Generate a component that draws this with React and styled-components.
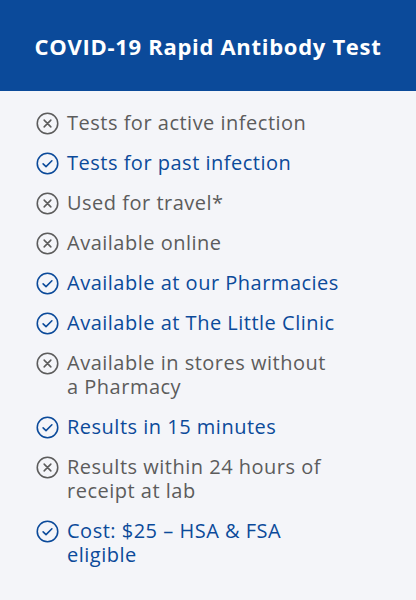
import styled, { createGlobalStyle } from "styled-components";

const GlobalStyle = createGlobalStyle`
  html, body {
    margin: 0;
    padding: 0;
    background: #f4f5f9;
  }
  body {
    font-family: "Open Sans", Lato, sans-serif;
  }
`;

const Card = styled.div`
  width: 416px;
  min-height: 600px;
  background: #f4f5f9;
`;

const Header = styled.header`
  height: 91px;
  background: #0b4a9a;
  display: flex;
  align-items: center;
  justify-content: center;
`;

const Title = styled.h1`
  margin: 0;
  color: #fff;
  font-size: 22px;
  font-weight: 700;
  letter-spacing: 0.7px;
`;

const List = styled.ul`
  list-style: none;
  margin: 0;
  padding: 20px 30px 0 35px;
  display: flex;
  flex-direction: column;
  gap: 16px;
`;

const Item = styled.li`
  display: flex;
  align-items: flex-start;
  gap: 8px;
  font-size: 20px;
  line-height: 24px;
  letter-spacing: 0.5px;
  color: ${(p) => (p.$ok ? "#0b4a9a" : "#5c5c5c")};
`;

const IconBox = styled.span`
  flex: none;
  width: 24px;
  height: 24px;
  display: flex;
  align-items: center;
  justify-content: center;
`;

const Text = styled.span`
  white-space: pre-line;
`;

function StatusIcon({ ok }) {
  return (
    <IconBox>
      <svg width="23" height="23" viewBox="0 0 22 22" fill="none" stroke="currentColor" strokeWidth="1.5" strokeLinecap="round" strokeLinejoin="round">
        <circle cx="11" cy="11" r="9.8" />
        {ok ? (
          <path d="M6.8 11.3l2.8 2.7 5.6-5.6" />
        ) : (
          <path d="M7.8 7.8l6.4 6.4M14.2 7.8l-6.4 6.4" />
        )}
      </svg>
    </IconBox>
  );
}

const items = [
  { ok: false, text: "Tests for active infection" },
  { ok: true, text: "Tests for past infection" },
  { ok: false, text: "Used for travel*" },
  { ok: false, text: "Available online" },
  { ok: true, text: "Available at our Pharmacies" },
  { ok: true, text: "Available at The Little Clinic" },
  { ok: false, text: "Available in stores without\na Pharmacy" },
  { ok: true, text: "Results in 15 minutes" },
  { ok: false, text: "Results within 24 hours of\nreceipt at lab" },
  { ok: true, text: "Cost: $25 – HSA & FSA\neligible" },
];

export default function App() {
  return (
    <Card>
      <GlobalStyle />
      <Header>
        <Title>COVID-19 Rapid Antibody Test</Title>
      </Header>
      <List>
        {items.map((it) => (
          <Item key={it.text} $ok={it.ok}>
            <StatusIcon ok={it.ok} />
            <Text>{it.text}</Text>
          </Item>
        ))}
      </List>
    </Card>
  );
}
